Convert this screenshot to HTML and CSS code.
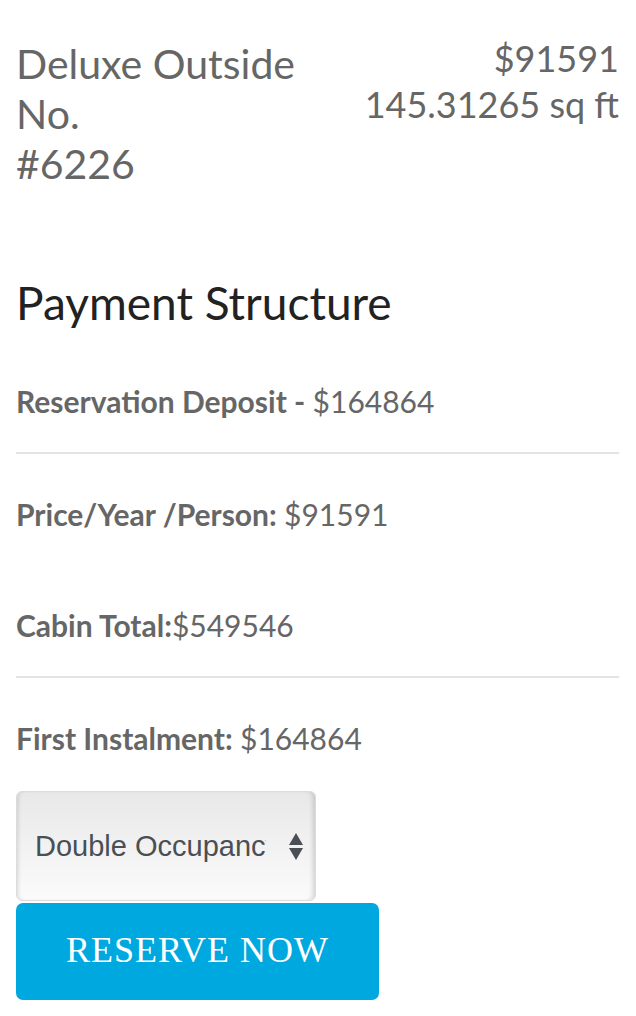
FILE: index.html
```html
<!DOCTYPE html>
<html>
<head>
<meta charset="utf-8">
<link rel="stylesheet" href="styles.css">
</head>
<body>
<div class="page">
  <div class="cabin-head">
    <div class="cabin-name">Deluxe Outside No.<br>#6226</div>
    <div class="cabin-meta">
      <div>$91591</div>
      <div>145.31265 sq ft</div>
    </div>
  </div>
  <h2 class="pay-title">Payment Structure</h2>
  <div class="pay-list">
    <div class="pay-row sep"><b>Reservation Deposit - </b>$164864</div>
    <div class="pay-row"><b>Price/Year /Person: </b>$91591</div>
    <div class="pay-row sep"><b>Cabin Total:</b>$549546</div>
    <div class="pay-row last"><b>First Instalment: </b>$164864</div>
  </div>
  <div class="select">
    <span class="select-text">Double Occupancy</span>
    <svg class="select-arrows" width="14" height="27" viewBox="0 0 14 27"><path d="M7 0 L14 12 L0 12 Z M0 15 L14 15 L7 27 Z" fill="#4a4f55"/></svg>
  </div>
  <button class="reserve">RESERVE NOW</button>
</div>
</body>
</html>
```
FILE: styles.css
```css
html, body {
  margin: 0;
  padding: 0;
  background: #fff;
}
.page {
  padding: 0 17px 0 16px;
  font-family: "Lato", "Open Sans", sans-serif;
  color: #666;
}
.cabin-head {
  display: flex;
  justify-content: space-between;
  align-items: flex-start;
  padding-top: 35px;
}
.cabin-name {
  margin-top: 4px;
  font-size: 41px;
  line-height: 50px;
  width: 290px;
}
.cabin-meta {
  font-size: 36px;
  line-height: 46px;
  text-align: right;
  white-space: nowrap;
}
.pay-title {
  margin: 86px 0 0;
  font-weight: 400;
  font-size: 46px;
  line-height: 56px;
  color: #222;
}
.pay-list {
  margin-top: 10px;
  font-size: 30px;
  line-height: 36px;
}
.pay-row {
  padding: 42px 0 33px;
}
.pay-row.sep {
  border-bottom: 2px solid #e3e3e3;
}
.pay-row.last {
  padding-bottom: 0;
}
.pay-row b {
  font-weight: 700;
}
.select {
  margin-top: 35px;
  width: 300px;
  height: 110px;
  box-sizing: border-box;
  border: 1px solid #dcdcdc;
  border-radius: 6px;
  background: linear-gradient(#e8e8e8, #fbfbfb);
  box-shadow: inset 4px 0 4px -3px rgba(0,0,0,0.14), inset -5px 0 5px -3px rgba(0,0,0,0.16);
  display: flex;
  align-items: center;
  padding: 0 12px 0 18px;
  font-family: "Liberation Sans", Arial, sans-serif;
  font-size: 29px;
  color: #4a4f55;
}
.select-text {
  width: 231px;
  overflow: hidden;
  white-space: nowrap;
}
.select-arrows {
  margin-left: auto;
}
.reserve {
  display: block;
  margin-top: 2px;
  width: 363px;
  height: 97px;
  border: 0;
  border-radius: 7px;
  background: #00a8e0;
  color: #fff;
  font-family: "Liberation Serif", "Times New Roman", serif;
  font-size: 36px;
  letter-spacing: 1px;
  padding: 0 0 3px;
}
```
